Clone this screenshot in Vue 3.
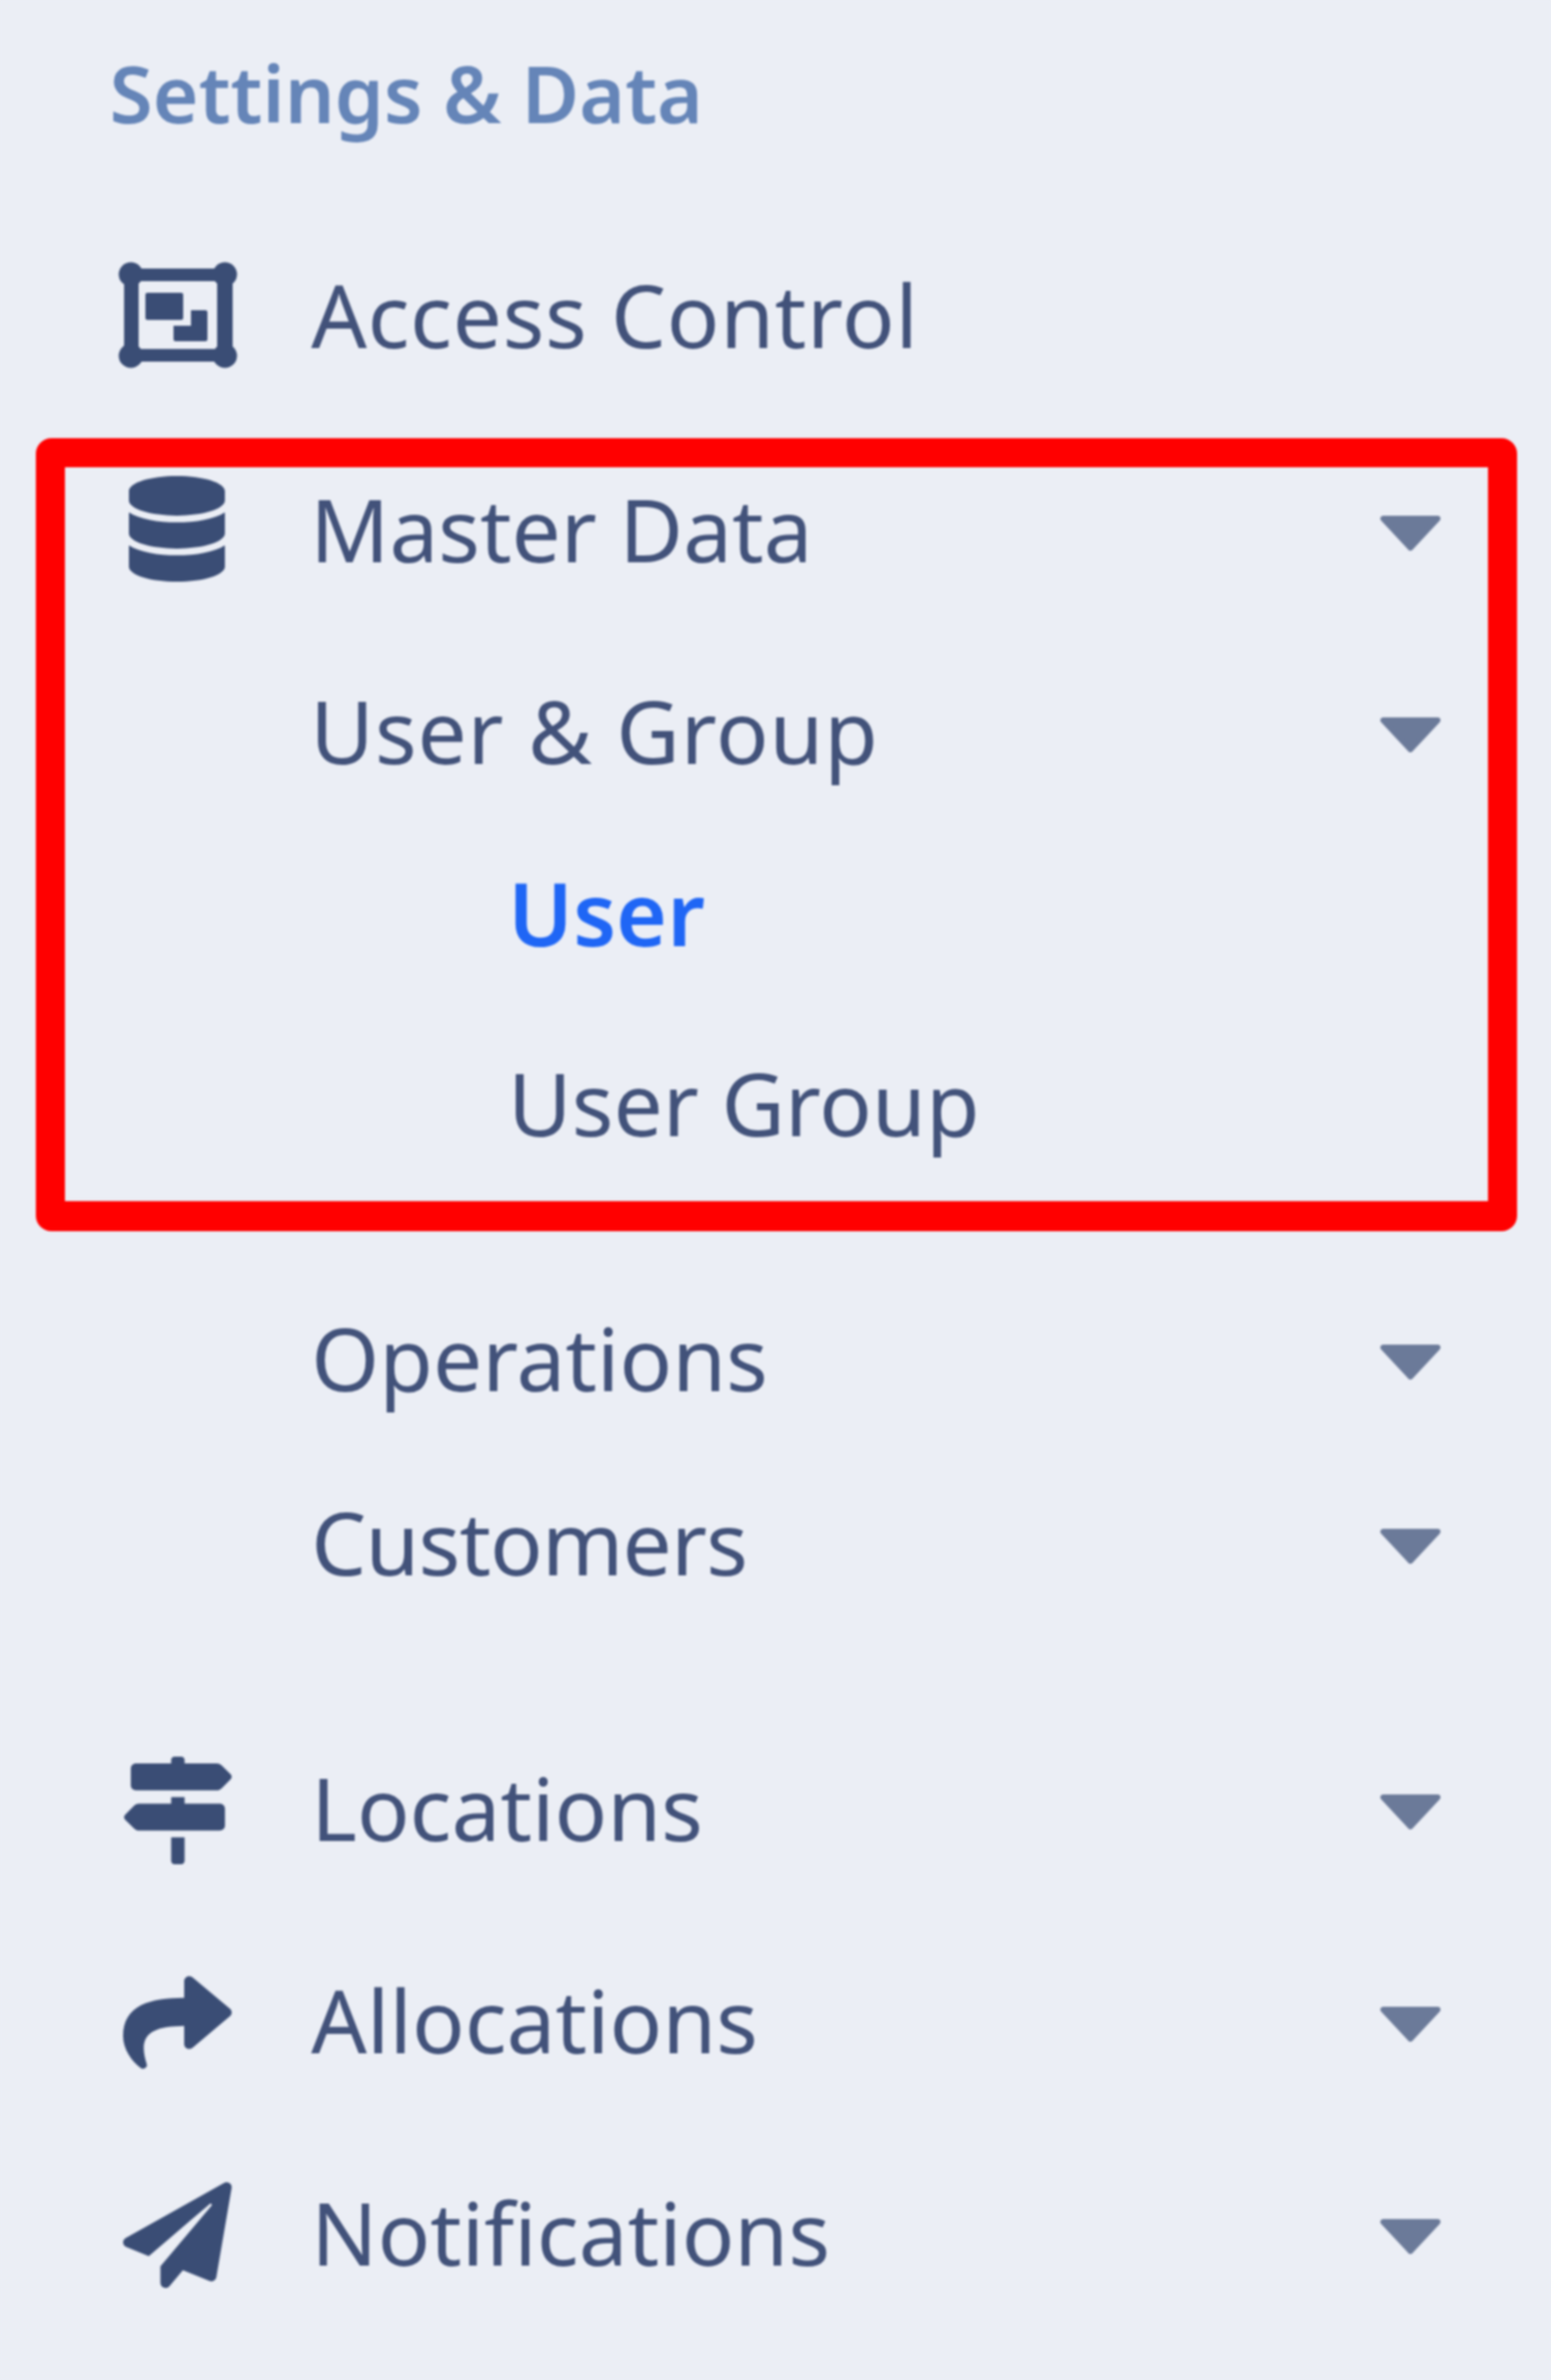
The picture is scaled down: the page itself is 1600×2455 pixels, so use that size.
<template>
  <div class="menu">
    <div class="heading">Settings &amp; Data</div>

    <div class="row access plain">
      <span class="icon">
        <svg width="123" height="110" viewBox="0 0 123 110">
          <path fill-rule="evenodd" d="M6 7h112v64h0v32H6zM21 20v70h81V20z" />
          <circle cx="13" cy="13" r="12.5" />
          <circle cx="110" cy="13" r="12.5" />
          <circle cx="13" cy="97" r="12.5" />
          <circle cx="110" cy="97" r="12.5" />
          <rect x="28" y="32" width="39" height="28" rx="2" />
          <path d="M75 50h15a2 2 0 0 1 2 2v28a2 2 0 0 1-2 2H59a2 2 0 0 1-2-2V66h18z" />
        </svg>
      </span>
      <span class="label">Access Control</span>
    </div>

    <div class="marked">
      <div class="row master">
        <span class="icon">
          <svg width="99" height="109" viewBox="0 0 448 512" preserveAspectRatio="none">
            <path d="M448 73.143v45.714C448 159.143 347.667 192 224 192S0 159.143 0 118.857V73.143C0 32.857 100.333 0 224 0s224 32.857 224 73.143zM448 176v102.857C448 319.143 347.667 352 224 352S0 319.143 0 278.857V176c48.125 33.143 136.208 48.572 224 48.572S399.874 209.143 448 176zm0 160v102.857C448 479.143 347.667 512 224 512S0 479.143 0 438.857V336c48.125 33.143 136.208 48.572 224 48.572S399.874 369.143 448 336z" />
          </svg>
        </span>
        <span class="label">Master Data</span>
        <svg class="caret" width="62" height="36" viewBox="0 0 62 36"><path d="M3 3h56L31 33z" /></svg>
      </div>
      <div class="row group-row">
        <span class="icon"></span>
        <span class="label">User &amp; Group</span>
        <svg class="caret" width="62" height="36" viewBox="0 0 62 36"><path d="M3 3h56L31 33z" /></svg>
      </div>
      <div class="row sub user-row">
        <span class="label active">User</span>
      </div>
      <div class="row sub user-group-row">
        <span class="label">User Group</span>
      </div>
    </div>

    <div v-for="item in lowerItems" :key="item.label" class="row plain" :class="item.cls">
      <span class="icon">
        <svg v-if="item.path" :width="item.w" :height="item.h" :viewBox="item.box" preserveAspectRatio="none">
          <path :d="item.path" />
        </svg>
      </span>
      <span class="label">{{ item.label }}</span>
      <svg class="caret" width="62" height="36" viewBox="0 0 62 36"><path d="M3 3h56L31 33z" /></svg>
    </div>
  </div>
</template>

<script setup>
const lowerItems = [
  { label: "Operations", cls: "operations" },
  { label: "Customers", cls: "customers" },
  {
    label: "Locations",
    cls: "locations",
    w: 111,
    h: 111,
    box: "0 0 512 512",
    path: "M507.31 84.69L464 41.37c-6-6-14.14-9.37-22.63-9.37H288V16c0-8.84-7.16-16-16-16h-32c-8.84 0-16 7.16-16 16v16H56c-13.25 0-24 10.75-24 24v80c0 13.25 10.75 24 24 24h385.37c8.49 0 16.62-3.37 22.63-9.37l43.31-43.31c6.25-6.26 6.25-16.38 0-22.63zM224 496c0 8.84 7.16 16 16 16h32c8.84 0 16-7.16 16-16V384h-64v112zm232-272H288v-32h-64v32H70.63c-8.49 0-16.62 3.37-22.63 9.37L4.69 276.69c-6.25 6.25-6.25 16.38 0 22.63L48 342.63c6 6 14.14 9.37 22.63 9.37H456c13.25 0 24-10.75 24-24v-80c0-13.25-10.75-24-24-24z",
  },
  {
    label: "Allocations",
    cls: "allocations",
    w: 112,
    h: 96,
    box: "0 30 512 450",
    path: "M503.691 189.836L327.687 37.851C312.281 24.546 288 35.347 288 56.015v80.053C127.371 137.907 0 170.1 0 322.326c0 61.441 39.581 122.309 83.333 154.132 13.653 9.931 33.111-2.533 28.077-18.631C66.066 312.814 132.917 274.316 288 272.085V360c0 20.7 24.3 31.453 39.687 18.164l176.004-152c11.071-9.562 11.086-26.753 0-36.328z",
  },
  {
    label: "Notifications",
    cls: "notifications",
    w: 112,
    h: 109,
    box: "0 0 512 512",
    path: "M476 3.2L12.5 270.6c-18.1 10.4-15.8 35.6 2.2 43.2L121 358.4l287.3-253.2c5.5-4.9 13.3 2.6 8.6 8.3L176 407v80.5c0 23.6 28.5 32.9 42.5 15.8L282 426l124.6 52.2c14.2 6 30.4-2.9 33-18.2l72-432C515 7.8 493.3-6.8 476 3.2z",
  },
];
</script>

<style>
html,
body {
  margin: 0;
  background: #ebeef5;
}
</style>

<style scoped>
.menu {
  box-sizing: border-box;
  width: 1600px;
  height: 2455px;
  padding: 46px 35px 0 37px;
  background: #ebeef5;
  font-family: "Noto Sans", sans-serif;
  font-size: 90px;
  color: #42527a;
  filter: blur(0.8px);
}

.heading {
  height: 100px;
  line-height: 100px;
  padding-left: 76px;
  font-size: 81px;
  font-weight: 600;
  color: #6585b8;
}

.row {
  display: flex;
  align-items: center;
  height: 100px;
  line-height: 100px;
  padding-right: 49px;
}

.plain {
  padding-left: 31px;
  padding-right: 79px;
}

.icon {
  display: flex;
  justify-content: center;
  flex: none;
  width: 230px;
  margin-right: 23px;
}

.icon svg {
  display: block;
  fill: #3a4d75;
}

.label {
  flex: 1;
  margin-bottom: 6px;
  white-space: nowrap;
}

.active {
  font-weight: 600;
  color: #1f66f5;
}

.caret {
  flex: none;
  margin-top: 3px;
  fill: #6b7a99;
  stroke: #6b7a99;
  stroke-width: 6;
  stroke-linejoin: round;
}

.marked {
  margin-top: 77px;
  padding-top: 16px;
  padding-bottom: 49px;
  border: 30px solid #ff0000;
  border-bottom-width: 31px;
  border-radius: 16px;
}

.master .icon {
  margin-bottom: 6px;
}

.sub {
  padding-left: 457px;
}

.access {
  margin-top: 129px;
}

.access .label {
  margin-bottom: 3px;
  letter-spacing: 0.7px;
}

.group-row {
  margin-top: 108px;
}

.group-row .label {
  letter-spacing: 0.9px;
}

.user-row {
  margin-top: 88px;
}

.user-group-row {
  margin-top: 96px;
}

.operations {
  margin-top: 83px;
}

.customers {
  margin-top: 90px;
}

.customers .label {
  letter-spacing: -0.9px;
}

.locations {
  margin-top: 174px;
}

.allocations,
.notifications {
  margin-top: 119px;
}
</style>
